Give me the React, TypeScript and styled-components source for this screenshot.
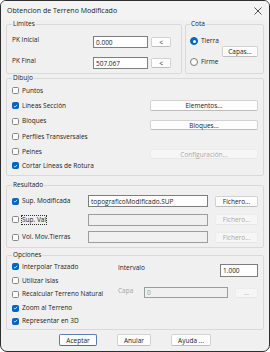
import React from 'react';
import styled, { createGlobalStyle } from 'styled-components';

const GlobalStyle = createGlobalStyle`
  html, body {
    margin: 0;
    padding: 0;
    background: #ffffff;
  }
  body {
    font-family: "Open Sans", "Liberation Sans", sans-serif;
    font-size: 6.5px;
    color: #1b1b1b;
  }
`;

const Window = styled.div`
  width: 270px;
  height: 352px;
  box-sizing: border-box;
  border: 1px solid #2e2e2e;
  border-radius: 6px 6px 7px 7px;
  background: #f0f0f0;
  display: flex;
  flex-direction: column;
  overflow: hidden;
`;

const TitleBar = styled.div`
  height: 19px;
  flex: none;
  display: flex;
  align-items: center;
  justify-content: space-between;
  padding-left: 6px;
  background: #f3f3f3;
  font-size: 7px;
  color: #1a1a1a;
`;

const CloseButton = styled.div`
  width: 22px;
  height: 19px;
  display: flex;
  align-items: center;
  justify-content: center;
`;

const Body = styled.div`
  flex: 1;
  display: flex;
  flex-direction: column;
  padding: 0 5px 0 5px;
`;

const TopRow = styled.div`
  display: flex;
  gap: 3px;
  flex: none;
`;

const Group = styled.fieldset<{ $h: number; $w?: number; $grow?: boolean; $mt?: number; $pl?: number }>`
  margin: ${p => p.$mt ?? 0}px 0 0 0;
  padding: 0 5px 0 ${p => p.$pl ?? 5}px;
  border: 1px solid #d9d9d9;
  border-radius: 2px;
  height: ${p => p.$h}px;
  ${p => (p.$w ? `width: ${p.$w}px;` : '')}
  flex: ${p => (p.$grow ? '1 1 0' : 'none')};
  box-sizing: border-box;
  min-width: 0;
  overflow: hidden;
`;

const Legend = styled.legend`
  padding: 0 1px;
  margin-left: 0;
  line-height: 8px;
  font-size: 6.5px;
  color: #1b1b1b;
`;

const LimitsGrid = styled.div`
  display: grid;
  grid-template-columns: 78px 55px 20px;
  column-gap: 3px;
  row-gap: 9px;
  margin-top: 8px;
  align-items: center;
`;

const FieldLabel = styled.span<{ $disabled?: boolean; $w?: number }>`
  line-height: 8px;
  align-self: start;
  white-space: nowrap;
  ${p => (p.$w ? `width: ${p.$w}px; flex: none;` : '')}
  color: ${p => (p.$disabled ? '#a6a6a6' : '#1b1b1b')};
`;

const Input = styled.div<{ $w?: number; $h?: number; $disabled?: boolean }>`
  ${p => (p.$w ? `width: ${p.$w}px;` : '')}
  height: ${p => p.$h ?? 12}px;
  box-sizing: border-box;
  border: 1px solid ${p => (p.$disabled ? '#9c9c9c' : '#7e7e7e')};
  background: ${p => (p.$disabled ? '#f0f0f0' : '#ffffff')};
  color: ${p => (p.$disabled ? '#9a9a9a' : '#1b1b1b')};
  padding-left: 2px;
  display: flex;
  align-items: center;
  white-space: nowrap;
  overflow: hidden;
  flex: none;
`;

const Button = styled.div<{ $w?: number; $h?: number; $disabled?: boolean; $default?: boolean; $mt?: number }>`
  ${p => (p.$w ? `width: ${p.$w}px;` : '')}
  height: ${p => p.$h ?? 11}px;
  margin-top: ${p => p.$mt ?? 0}px;
  box-sizing: border-box;
  border: 1px solid ${p => (p.$default ? '#5b7fae' : p.$disabled ? '#ececec' : '#d2d2d2')};
  border-bottom-color: ${p => (p.$default ? '#4a6e9e' : p.$disabled ? '#e6e6e6' : '#bdbdbd')};
  border-radius: 2px;
  background: ${p => (p.$disabled ? '#f6f6f6' : '#fdfdfd')};
  color: ${p => (p.$disabled ? '#a8a8a8' : '#1b1b1b')};
  display: flex;
  align-items: center;
  justify-content: center;
  white-space: nowrap;
  flex: none;
`;

const CotaBody = styled.div`
  display: flex;
  justify-content: space-between;
  align-items: center;
  margin-top: 8px;
`;

const RadioColumn = styled.div`
  display: flex;
  flex-direction: column;
  gap: 11px;
`;

const OptionRow = styled.label`
  display: flex;
  align-items: center;
  gap: 3px;
  height: 10px;
  line-height: 8px;
  white-space: nowrap;
`;

const RadioDot = styled.span<{ $on?: boolean }>`
  width: 8px;
  height: 8px;
  box-sizing: border-box;
  border-radius: 50%;
  flex: none;
  background: ${p => (p.$on ? '#0067c0' : '#fbfbfb')};
  border: 1px solid ${p => (p.$on ? '#0067c0' : '#7c7c7c')};
  display: flex;
  align-items: center;
  justify-content: center;
  &::after {
    content: '';
    display: ${p => (p.$on ? 'block' : 'none')};
    width: 3px;
    height: 3px;
    border-radius: 50%;
    background: #ffffff;
  }
`;

const Box = styled.span<{ $on?: boolean }>`
  width: 7px;
  height: 7px;
  box-sizing: border-box;
  border-radius: 1.5px;
  flex: none;
  border: 1px solid ${p => (p.$on ? '#0067c0' : '#868686')};
  background: ${p => (p.$on ? '#0067c0' : '#fbfbfb')};
  display: flex;
  align-items: center;
  justify-content: center;
`;

const FocusText = styled.span`
  outline: 1px dotted #303030;
  outline-offset: 0;
`;

const DrawGrid = styled.div`
  display: grid;
  grid-template-columns: 1fr 108px;
  margin-top: 1px;
`;

const CheckList = styled.div<{ $rows: string }>`
  display: grid;
  grid-template-rows: ${p => p.$rows};
  align-items: center;
`;

const ButtonColumn = styled.div`
  display: flex;
  flex-direction: column;
  padding-top: 17px;
`;

const ResultGrid = styled.div`
  display: grid;
  grid-template-columns: 69px 120px 43px;
  grid-template-rows: 18.5px 18.5px 16px;
  column-gap: 7px;
  align-items: center;
  margin-top: 3px;
`;

const OptionsGrid = styled.div`
  display: grid;
  grid-template-columns: 106px 1fr;
  margin-top: 1px;
`;

const OptionsRight = styled.div`
  display: flex;
  flex-direction: column;
  gap: 10px;
  padding-top: 4px;
`;

const InlineRow = styled.div`
  display: flex;
  align-items: center;
`;

const Spacer = styled.div`
  flex: 1;
`;

const Footer = styled.div`
  display: flex;
  justify-content: center;
  gap: 20px;
  margin-top: 4px;
  flex: none;
`;

const Check = ({ on }: { on?: boolean }) => (
  <Box $on={on}>
    {on && (
      <svg width="6" height="6" viewBox="0 0 6 6">
        <path d="M1 3.1 L2.4 4.4 L5 1.6" fill="none" stroke="#ffffff" strokeWidth="0.9" />
      </svg>
    )}
  </Box>
);

const CheckOption = ({ label, on, focus }: { label: string; on?: boolean; focus?: boolean }) => (
  <OptionRow>
    <Check on={on} />
    {focus ? <FocusText>{label}</FocusText> : <span>{label}</span>}
  </OptionRow>
);

const App: React.FC = () => {
  return (
    <>
      <GlobalStyle />
      <Window>
        <TitleBar>
          <span>Obtencion de Terreno Modificado</span>
          <CloseButton>
            <svg width="8" height="8" viewBox="0 0 8 8">
              <path d="M0.5 0.5 L7.5 7.5 M7.5 0.5 L0.5 7.5" stroke="#2a2a2a" strokeWidth="0.8" />
            </svg>
          </CloseButton>
        </TitleBar>
        <Body>
          <TopRow>
            <Group $h={54} $w={176}>
              <Legend>Límites</Legend>
              <LimitsGrid>
                <FieldLabel>PK Inicial</FieldLabel>
                <Input>0.000</Input>
                <Button $h={10}>&lt;</Button>
                <FieldLabel>PK Final</FieldLabel>
                <Input>507.067</Input>
                <Button $h={10}>&lt;</Button>
              </LimitsGrid>
            </Group>
            <Group $h={54} $pl={4} $grow>
              <Legend>Cota</Legend>
              <CotaBody>
                <RadioColumn>
                  <OptionRow>
                    <RadioDot $on />
                    <span>Tierra</span>
                  </OptionRow>
                  <OptionRow>
                    <RadioDot />
                    <span>Firme</span>
                  </OptionRow>
                </RadioColumn>
                <Button $w={36}>Capas...</Button>
              </CotaBody>
            </Group>
          </TopRow>

          <Group $h={102}>
            <Legend>Dibujo</Legend>
            <DrawGrid>
              <CheckList $rows="15.3px 15.3px 15.3px 15.3px 15.3px 13px">
                <CheckOption label="Puntos" />
                <CheckOption label="Líneas Sección" on />
                <CheckOption label="Bloques" />
                <CheckOption label="Perfiles Transversales" />
                <CheckOption label="Peines" />
                <CheckOption label="Cortar Líneas de Rotura" on />
              </CheckList>
              <ButtonColumn>
                <Button>Elementos...</Button>
                <Button $mt={9} $h={10}>Bloques...</Button>
                <Button $mt={19} $h={10} $disabled>Configuración...</Button>
              </ButtonColumn>
            </DrawGrid>
          </Group>

          <Group $h={67} $mt={5}>
            <Legend>Resultado</Legend>
            <ResultGrid>
              <CheckOption label="Sup. Modificada" on />
              <Input>topograficoModificado.SUP</Input>
              <Button>Fichero...</Button>
              <CheckOption label="Sup. Val" focus />
              <Input $disabled />
              <Button $disabled>Fichero...</Button>
              <CheckOption label="Vol. Mov.Tierras" />
              <Input $disabled />
              <Button $disabled>Fichero...</Button>
            </ResultGrid>
          </Group>

          <Group $h={79} $mt={3}>
            <Legend>Opciones</Legend>
            <OptionsGrid>
              <CheckList $rows="13.8px 13.8px 13.8px 13.8px 12px">
                <CheckOption label="Interpolar Trazado" on />
                <CheckOption label="Utilizar Islas" />
                <CheckOption label="Recalcular Terreno Natural" />
                <CheckOption label="Zoom al Terreno" on />
                <CheckOption label="Representar en 3D" on />
              </CheckList>
              <OptionsRight>
                <InlineRow>
                  <FieldLabel>Intervalo</FieldLabel>
                  <Spacer />
                  <Input $w={38} $h={13}>1.000</Input>
                </InlineRow>
                <InlineRow>
                  <FieldLabel $disabled $w={26}>Capa</FieldLabel>
                  <Input $w={84} $h={11} $disabled>0</Input>
                  <Spacer />
                  <Button $w={23} $h={10} $disabled>...</Button>
                </InlineRow>
              </OptionsRight>
            </OptionsGrid>
          </Group>

          <Footer>
            <Button $w={38} $h={12} $default>Aceptar</Button>
            <Button $w={34} $h={12}>Anular</Button>
            <Button $w={40} $h={12}>Ayuda ...</Button>
          </Footer>
        </Body>
      </Window>
    </>
  );
};

export default App;
